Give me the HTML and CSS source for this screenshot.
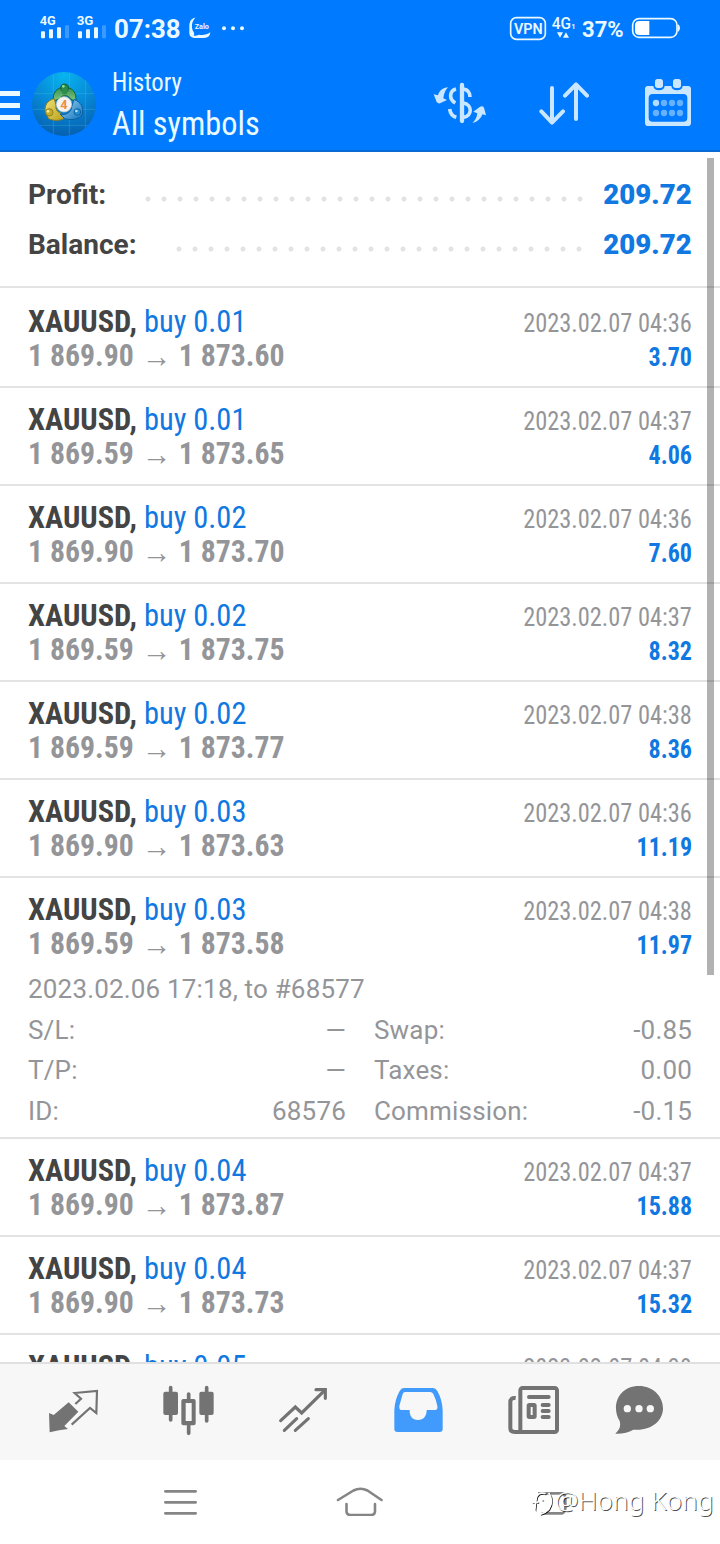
FILE: index.html
```html
<!DOCTYPE html>
<html lang="en">
<head>
<meta charset="utf-8">
<title>History</title>
<link rel="stylesheet" href="styles.css">
</head>
<body>
<header class="header">
  <div class="status">
    <svg class="status-left" width="220" height="34" viewBox="105 30 660 102">
      <g fill="#eaf9ff">
        <text class="net" x="119" y="74" textLength="48" lengthAdjust="spacingAndGlyphs">4G</text>
        <text class="net" x="230" y="74" textLength="50" lengthAdjust="spacingAndGlyphs">3G</text>
        <rect x="123" y="94" width="12" height="21" rx="3"/><rect x="147" y="88" width="12" height="27" rx="3"/><rect x="171" y="82" width="12" height="33" rx="3"/>
        <rect x="234" y="94" width="12" height="21" rx="3"/><rect x="258" y="88" width="12" height="27" rx="3"/><rect x="282" y="82" width="12" height="33" rx="3"/>
        <g opacity=".25"><rect x="195" y="76" width="12" height="39" rx="3"/><rect x="306" y="76" width="12" height="39" rx="3"/></g>
        <text class="clock" x="342" y="114" textLength="200" lengthAdjust="spacingAndGlyphs">07:38</text>
        <path d="M586 53C573 55 568 64 568 80V98C568 109 575 114 588 114H612C624 114 630 108 631 97C621 104 609 106 597 104C591 107 586 108 581 107C583 103 583 100 581 96C573 83 574 66 586 53Z"/>
        <text class="zalo" x="584" y="87" textLength="43" lengthAdjust="spacingAndGlyphs">Zalo</text>
        <circle cx="672" cy="85" r="6"/><circle cx="699" cy="85" r="6"/><circle cx="726" cy="85" r="6"/>
      </g>
    </svg>
    <svg class="status-right" width="180" height="34" viewBox="255 30 540 102">
      <g fill="#eaf9ff">
        <rect x="272" y="53" width="104" height="65" rx="17" fill="none" stroke="#eaf9ff" stroke-width="5"/>
        <text class="vpn" x="282" y="102" textLength="86" lengthAdjust="spacingAndGlyphs">VPN</text>
        <text class="lte" x="395" y="86" textLength="58" lengthAdjust="spacingAndGlyphs">4G</text>
        <text class="sim" x="454" y="87">1</text>
        <path d="M411 97h18l-9 16zM429 113l9-16 9 16z"/>
        <text class="percent" x="486" y="110" textLength="125" lengthAdjust="spacingAndGlyphs">37%</text>
        <rect x="638" y="56" width="133" height="56" rx="19" fill="none" stroke="#eaf9ff" stroke-width="5"/>
        <path d="M658 63H688V105H658Q645 105 645 92V76Q645 63 658 63Z" fill="#fff"/>
        <path d="M774 73Q780 76 780 84T774 96Z"/>
      </g>
    </svg>
  </div>
  <div class="appbar">
    <svg class="menu" width="20" height="30" viewBox="0 0 20 30"><path d="M0 3.500H20M0 15.500H20M0 27.500H20" stroke="#eaf9ff" stroke-width="5"/></svg>
    <svg class="logo" width="64" height="64" viewBox="0 0 192 192">
      <defs>
        <radialGradient id="sky" cx=".5" cy=".05" r=".95"><stop offset="0" stop-color="#08b4ee"/><stop offset=".5" stop-color="#078bd8"/><stop offset="1" stop-color="#0660b0"/></radialGradient>
        <linearGradient id="green" x2="0" y2="1"><stop offset="0" stop-color="#2f8f52"/><stop offset="1" stop-color="#8bcb84"/></linearGradient>
        <linearGradient id="gold" x2="1" y2="1"><stop offset="0" stop-color="#f0e27a"/><stop offset="1" stop-color="#b9a019"/></linearGradient>
        <linearGradient id="blue" x2="1" y2="1"><stop offset="0" stop-color="#9bd6f2"/><stop offset="1" stop-color="#1373bd"/></linearGradient>
      </defs>
      <circle cx="96" cy="96" r="96" fill="url(#sky)"/>
      <path d="M64 6V186M112 2V190M160 24V168M6 65H186M2 112H190M24 160H168" stroke="#5fd0f0" stroke-opacity=".3" stroke-width="2.500" fill="none"/>
      <g stroke-width="3">
        <path d="M65 87C60 63 74 47 98 45C122 47 136 62 131 90L112 78C111 69 86 68 84 80Z" fill="url(#green)" stroke="#155f38"/>
        <path d="M67 80C45 86 37 100 40 119L50 140C66 147 84 147 96 139L85 122C76 121 70 111 72 100Z" fill="url(#gold)" stroke="#8b7b20"/>
        <path d="M126 82C148 91 155 106 151 127C144 141 121 146 98 140L84 126C100 131 119 121 119 104Z" fill="url(#blue)" stroke="#0c5d9e"/>
        <circle cx="98" cy="48" r="12" fill="#238a49" stroke="#14613b"/><path d="M88 52H108L104 67H92Z" fill="#318d4d"/>
        <circle cx="52" cy="121" r="11" fill="#c8ae25" stroke="#94801b"/><circle cx="136" cy="120" r="10" fill="#238bcf" stroke="#0d65a5"/>
      </g>
      <circle cx="94" cy="43" r="4" fill="#9bdb9f"/><circle cx="48" cy="118" r="4" fill="#f7efa7"/><circle cx="133" cy="117" r="4" fill="#a9def6"/>
      <circle cx="96" cy="97" r="23" fill="#f4f3ef" stroke="#c6c6c0" stroke-width="2"/>
      <text class="logo-digit" x="85" y="111">4</text>
    </svg>
    <div class="titles"><div class="subtitle">History</div><div class="title">All symbols</div></div>
    <div class="actions">
      <svg width="54" height="44" viewBox="39 243 162 132">
        <g fill="none" stroke="#cbe7ff" stroke-width="11">
          <path d="M126 255V363" stroke-width="13" stroke-linecap="round"/>
          <path d="M108 267C89 272 85 297 106 309M130 267C142 269 150 278 150 291M89 327C91 342 98 349 109 352M130 309C157 313 158 348 130 352"/>
        </g>
        <g fill="#cbe7ff"><path d="M84 262C69 263 58 272 54 286L41 283L50 306Q54 311 60 310L81 300L70 295Q72 275 84 262Z"/><path d="M157 369C164 364 171 353 172 340L160 335L180 320Q188 316 192 323L198 346L187 343C182 357 171 367 157 369Z"/></g>
      </svg>
      <svg width="50" height="44" viewBox="357 243 150 132"><path d="M396 264V366M364 334L396 368L429 334M468 357V254M435 287L468 253L501 287" fill="none" stroke="#cbe7ff" stroke-width="12" stroke-linecap="round" stroke-linejoin="round"/></svg>
      <svg width="48" height="50" viewBox="672 231 144 150">
        <path d="M684 258H700Q702 271 717 271T734 258H754Q756 271 771 271T788 258H804Q813 258 813 267V368Q813 378 803 378H685Q675 378 675 368V267Q675 258 684 258ZM698 282Q686 282 686 294V353Q686 365 698 365H790Q802 365 802 353V294Q802 282 790 282Z" fill="#cbe7ff" fill-rule="evenodd"/>
        <rect x="705" y="237" width="24" height="27" rx="8" fill="#cbe7ff"/><rect x="759" y="237" width="24" height="27" rx="8" fill="#cbe7ff"/>
        <circle cx="708" cy="309" r="9.500" fill="#b4dcff"/>
        <g fill="#66b2ff"><circle cx="732" cy="309" r="9.500"/><circle cx="756" cy="309" r="9.500"/><circle cx="780" cy="309" r="9.500"/><circle cx="708" cy="339" r="9.500"/><circle cx="732" cy="339" r="9.500"/><circle cx="756" cy="339" r="9.500"/><circle cx="780" cy="339" r="9.500"/></g>
      </svg>
    </div>
  </div>
</header>

<main class="list">
  <section class="summary">
    <div class="total"><span>Profit:</span><i class="dots dots-profit"></i><b>209.72</b></div>
    <div class="total"><span>Balance:</span><i class="dots dots-balance"></i><b>209.72</b></div>
  </section>
  <article class="deal"><div class="line"><div class="symbol"><b>XAUUSD,</b> <span>buy 0.01</span></div><time>2023.02.07 04:36</time></div><div class="line"><div class="price">1 869.90<i>→</i>1 873.60</div><div class="gain">3.70</div></div></article>
  <article class="deal"><div class="line"><div class="symbol"><b>XAUUSD,</b> <span>buy 0.01</span></div><time>2023.02.07 04:37</time></div><div class="line"><div class="price">1 869.59<i>→</i>1 873.65</div><div class="gain">4.06</div></div></article>
  <article class="deal"><div class="line"><div class="symbol"><b>XAUUSD,</b> <span>buy 0.02</span></div><time>2023.02.07 04:36</time></div><div class="line"><div class="price">1 869.90<i>→</i>1 873.70</div><div class="gain">7.60</div></div></article>
  <article class="deal"><div class="line"><div class="symbol"><b>XAUUSD,</b> <span>buy 0.02</span></div><time>2023.02.07 04:37</time></div><div class="line"><div class="price">1 869.59<i>→</i>1 873.75</div><div class="gain">8.32</div></div></article>
  <article class="deal"><div class="line"><div class="symbol"><b>XAUUSD,</b> <span>buy 0.02</span></div><time>2023.02.07 04:38</time></div><div class="line"><div class="price">1 869.59<i>→</i>1 873.77</div><div class="gain">8.36</div></div></article>
  <article class="deal"><div class="line"><div class="symbol"><b>XAUUSD,</b> <span>buy 0.03</span></div><time>2023.02.07 04:36</time></div><div class="line"><div class="price">1 869.90<i>→</i>1 873.63</div><div class="gain">11.19</div></div></article>
  <article class="deal deal-open"><div class="line"><div class="symbol"><b>XAUUSD,</b> <span>buy 0.03</span></div><time>2023.02.07 04:38</time></div><div class="line"><div class="price">1 869.59<i>→</i>1 873.58</div><div class="gain">11.97</div></div>
    <div class="opened">2023.02.06 17:18, to #68577</div>
    <dl class="details">
      <div><dt>S/L:</dt><dd>—</dd></div><div><dt>Swap:</dt><dd>-0.85</dd></div>
      <div><dt>T/P:</dt><dd>—</dd></div><div><dt>Taxes:</dt><dd>0.00</dd></div>
      <div><dt>ID:</dt><dd>68576</dd></div><div><dt>Commission:</dt><dd>-0.15</dd></div>
    </dl>
  </article>
  <article class="deal"><div class="line"><div class="symbol"><b>XAUUSD,</b> <span>buy 0.04</span></div><time>2023.02.07 04:37</time></div><div class="line"><div class="price">1 869.90<i>→</i>1 873.87</div><div class="gain">15.88</div></div></article>
  <article class="deal"><div class="line"><div class="symbol"><b>XAUUSD,</b> <span>buy 0.04</span></div><time>2023.02.07 04:37</time></div><div class="line"><div class="price">1 869.90<i>→</i>1 873.73</div><div class="gain">15.32</div></div></article>
  <article class="deal"><div class="line"><div class="symbol"><b>XAUUSD,</b> <span>buy 0.05</span></div><time>2023.02.07 04:38</time></div></article>
  <div class="scrollbar"></div>
</main>

<nav class="tabs">
  <svg width="52" height="52" viewBox="144 165 156 156">
    <path d="M206 217L235 245L193 288L204 297Q178 300 149 307L147 249L161 255Z" fill="#737373"/>
    <path d="M226 222L243 206L224 189L291 183L289 249L270 234L215 284" fill="none" stroke="#737373" stroke-width="6.500"/>
  </svg>
  <svg width="52" height="52" viewBox="489 165 156 156" fill="#737373">
    <path d="M512 173V270M620 173V273M566 192V214M566 280V310" stroke="#737373" stroke-width="11" stroke-linecap="round"/>
    <rect x="490" y="185" width="44" height="70" rx="6"/><rect x="598" y="185" width="43" height="70" rx="6"/>
    <path d="M550 207H581Q587 207 587 213V280Q587 286 581 286H550Q544 286 544 280V213Q544 207 550 207ZM557 219V273H575V219Z" fill-rule="evenodd"/>
  </svg>
  <svg width="52" height="52" viewBox="834 165 156 156" fill="none" stroke="#737373" stroke-width="9.500">
    <path d="M842 272L886 231L905 249L974 181M853 301L890 266M886 301L925 266" stroke-linecap="round"/>
    <path d="M948 179H976V205" stroke-linecap="round"/>
  </svg>
  <svg width="52" height="52" viewBox="99 165 156 156"><path d="M131 174H219Q227 174 232 183Q247 210 248 241V297Q248 306 239 306H112Q103 306 103 297V241Q104 210 119 183Q124 174 131 174ZM135 186Q130 186 128 192L118 228Q117 240 124 240H149C148 258 157 270 174 270S200 258 200 240H225Q234 240 232 228Q228 208 220 192Q217 186 210 186Z" fill="#419bfc" fill-rule="evenodd"/></svg>
  <svg width="52" height="52" viewBox="444 165 156 156" fill="none" stroke="#737373">
    <rect x="481" y="174" width="110" height="132" rx="7" stroke-width="12"/>
    <path d="M467 204Q451 202 451 217V295Q451 306 464 306H487" stroke-width="12"/>
    <path d="M507 201H566M548 225H566M548 243H566M548 261H566" stroke-width="12" stroke-linecap="round"/>
    <rect x="506" y="225" width="18" height="36" rx="2" stroke-width="12"/>
  </svg>
  <svg width="52" height="52" viewBox="759 165 156 156"><path d="M837 168C878 168 909 198 909 235C909 273 873 304 820 299C805 308 786 312 766 311C779 299 783 289 779 273C752 229 775 168 837 168Z" fill="#737373"/><g fill="#f7f7f7"><circle cx="802" cy="236" r="11"/><circle cx="837" cy="236" r="11"/><circle cx="871" cy="236" r="11"/></g></svg>
</nav>

<footer class="system">
  <svg class="recents" width="36" height="30" viewBox="489 474 108 90"><path d="M496 484H587M496 517H587M496 550H587" stroke="#858585" stroke-width="8" stroke-linecap="round"/></svg>
  <svg class="home" width="50" height="34" viewBox="0 0 50 34"><path d="M3 18L18.500 8.500Q25.500 5 32.500 8.500L46.500 18M11.500 22V29Q11.500 33 15.500 33H36Q40 33 40 29V22" fill="none" stroke="#858585" stroke-width="2.600" stroke-linecap="round" stroke-linejoin="round"/></svg>
  <svg class="back" width="44" height="34" viewBox="504 468 132 102">
    <path d="M534 490H608Q615 491 616 504V534Q615 548 606 550H545" fill="none" stroke="#858585" stroke-width="8"/>
    <g transform="translate(2.500 2.500)" fill="none" stroke="#111" stroke-width="4"><path d="M557 491Q530 484 528 509L524 543M516 517H535M566 488Q583 511 566 538Q554 550 540 553"/></g>
    <path d="M557 491Q530 484 528 509L524 543M516 517H535M566 488Q583 511 566 538Q554 550 540 553M514 543L528 545" fill="none" stroke="#fff" stroke-width="5"/>
    <circle cx="550" cy="513" r="3" fill="#999"/>
  </svg>
  <div class="watermark">@Hong Kong</div>
</footer>
</body>
</html>
```
FILE: styles.css
```css
* { box-sizing: border-box; }
body { margin: 0; width: 720px; height: 1544px; overflow: hidden; background: #fff; font-family: Roboto, sans-serif; display: flex; flex-direction: column; }
svg { display: block; flex: none; }
i { font-style: normal; }

.header { height: 152px; flex: none; background: #007aff; border-bottom: 2px solid #0a6ad6; }
.status { display: flex; justify-content: space-between; padding: 10px 35px 0 35px; height: 60px; }
.status text { font-family: Roboto, sans-serif; font-weight: 700; }
.net { font-size: 38px; }
.clock { font-size: 76px; }
.zalo { font-size: 21px; }
.status .vpn { font-size: 46px; font-weight: 600; }
.status .lte { font-size: 47px; font-weight: 500; }
.sim { font-size: 22px; }
.percent { font-size: 64px; }
.appbar { display: flex; height: 90px; align-items: flex-start; }
.menu { margin-top: 30px; }
.logo { margin: 12px 0 0 12px; }
.logo-digit { font: 700 38px Roboto, sans-serif; fill: #ee8d44; }
.titles { margin-left: 16px; color: #eafaff; font-family: "Roboto Condensed", Roboto, sans-serif; white-space: nowrap; transform: scaleX(.95); transform-origin: left; }
.subtitle { font-size: 26px; line-height: 36px; margin-top: 4px; }
.title { font-size: 34px; line-height: 46px; }
.actions { display: flex; margin-left: auto; margin-right: 28px; align-items: flex-start; }
.actions svg:nth-child(1) { margin: 21px 52px 0 0; }
.actions svg:nth-child(2) { margin: 21px 55px 0 0; }
.actions svg:nth-child(3) { margin-top: 17px; }

.list { position: relative; height: 1210px; overflow: hidden; flex: none; }
.summary { height: 136px; padding: 17px 28px 0; border-bottom: 2px solid #e3e3e3; }
.total { display: flex; align-items: center; height: 50px; font-size: 28px; font-weight: 700; color: #444; }
.total b { margin-left: auto; color: #1078e0; transform: scaleX(.985); transform-origin: right; }
.dots { height: 6px; margin-top: 10px; background: radial-gradient(circle at 8px 3px, #e3e3e3 2.1px, transparent 2.9px) 0 0 / 16px 6px repeat-x; }
.dots-profit { width: 448px; margin-left: 34px; }
.dots-balance { width: 416px; margin-left: 34px; }
.deal { height: 98px; padding: 14px 28px 0; border-bottom: 2px solid #e3e3e3; font-family: "Roboto Condensed", Roboto, sans-serif; }
.summary + .deal { height: 100px; padding-top: 16px; }
.deal-open { height: 261px; }
.line { display: flex; justify-content: space-between; align-items: baseline; height: 34px; line-height: 34px; white-space: nowrap; }
.symbol { font-size: 32px; color: #1078e0; transform: scaleX(.951); transform-origin: left; }
.symbol b { color: #444; }
.price { font-size: 32px; font-weight: 700; color: #949599; transform: scaleX(.93); transform-origin: left; }
.price i { position: relative; top: 1px; display: inline-block; width: 48.5px; text-align: center; font-family: Roboto, serif; line-height: 30px; }
.line time { font-size: 26px; color: #949599; transform: scaleX(.938); transform-origin: right; }
.gain { font-size: 26px; font-weight: 700; color: #1078e0; transform: scaleX(.925); transform-origin: right; }
.opened { font: 26px/40px Roboto, sans-serif; letter-spacing: .18px; color: #949599; padding-top: 9px; height: 50px; }
.details { margin: 0; display: grid; grid-template-columns: 318px 318px; column-gap: 28px; grid-template-rows: 40px 41px 40px; font: 26px/40px Roboto, sans-serif; letter-spacing: .18px; color: #949599; }
.details div { display: flex; justify-content: space-between; }
.details dd { margin: 0; }
.scrollbar { position: absolute; left: 707px; top: 6px; width: 7px; height: 817px; background: rgba(0, 0, 0, .3); }

.tabs { height: 98px; flex: none; background: #f7f7f7; border-top: 2px solid #e0e0e0; display: flex; padding: 21px 0 0 48px; }
.tabs svg:nth-child(2) { margin-left: 63px; }
.tabs svg:nth-child(3) { margin-left: 63px; }
.tabs svg:nth-child(4) { margin-left: 63px; }
.tabs svg:nth-child(5) { margin-left: 63px; }
.tabs svg:nth-child(6) { margin-left: 53px; }

.system { height: 84px; flex: none; display: flex; align-items: flex-start; }
.recents { margin: 28px 0 0 163px; }
.home { margin: 22px 0 0 136px; }
.back { margin: 26px 0 0 143px; }
.watermark { margin: 21px 0 0 -17px; font: 300 26px/38px "Noto Sans", sans-serif; color: #fff; text-shadow: 1px 1px 0 rgba(0, 0, 0, .7); white-space: nowrap; transform: scaleX(1.01); transform-origin: left; }
```
